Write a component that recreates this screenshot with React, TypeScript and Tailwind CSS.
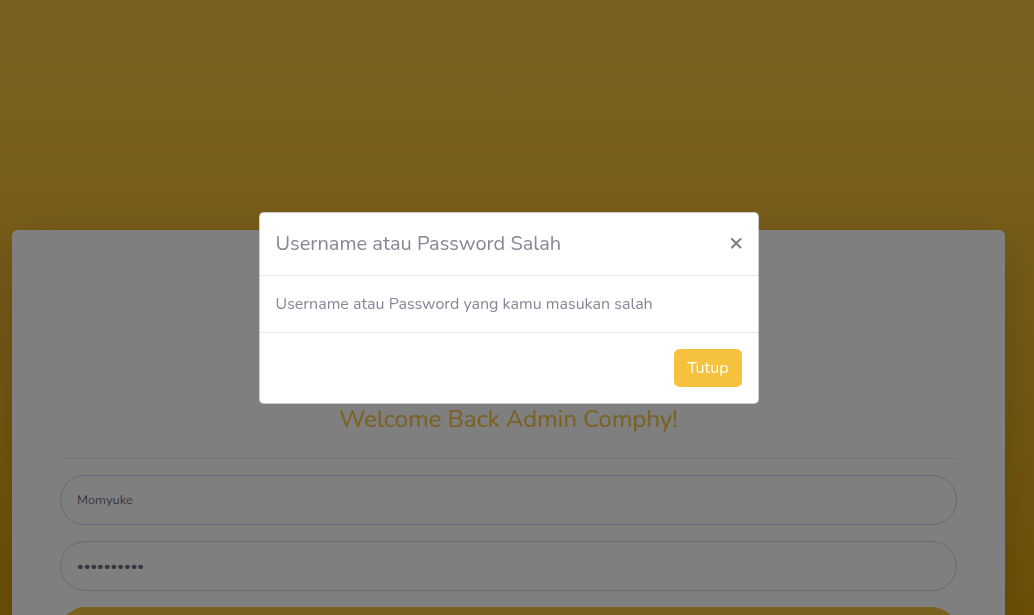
export default function App() {
  return (
    <div className="relative min-h-[615px] h-[615px] overflow-hidden bg-gradient-to-b from-[#f6c23e] from-10% to-[#dda20a] font-['Nunito','Lato','Noto_Sans',sans-serif] text-[#858796]">
      {/* Login page */}
      <div className="pl-3 pr-[29px] pt-[230px]">
        <div className="rounded-[0.35rem] bg-white shadow-[0_1rem_3rem_rgba(0,0,0,0.175)]">
          <div className="px-12 pt-[175px] pb-12">
            <h1 className="text-center text-[24px] leading-[29px] text-[#f6c23e]">
              Welcome Back Admin Comphy!
            </h1>
            <hr className="mt-[24px] mb-4 border-t border-[#e3e6f0]" />
            <form className="flex flex-col gap-4">
              <input
                readOnly
                value="Momyuke"
                className="h-[50px] w-full rounded-full border border-[#d1d3e2] px-4 text-[12.8px] text-[#6e707e] outline-none"
              />
              <input
                readOnly
                type="password"
                value="momyuke123"
                className="h-[50px] w-full rounded-full border border-[#d1d3e2] px-4 text-[12.8px] text-[#6e707e] outline-none"
              />
              <button
                type="button"
                className="h-[50px] w-full rounded-full bg-[#f6c23e] text-[12.8px] text-white"
              >
                Login
              </button>
            </form>
          </div>
        </div>
      </div>

      {/* Modal backdrop */}
      <div className="fixed inset-0 bg-black/50" />

      {/* Modal */}
      <div className="fixed inset-0 flex items-center justify-center pr-[17px]">
        <div className="w-[500px] rounded-[0.3rem] border border-black/20 bg-white">
          <div className="flex items-start justify-between border-b border-[#e3e6f0] px-4 py-4">
            <h5 className="text-[20px] leading-[30px] text-[#858796]">Username atau Password Salah</h5>
            <button className="mr-[-2px] mt-[-2px] text-[24px] font-bold leading-[30px] text-black opacity-50">
              ×
            </button>
          </div>
          <div className="border-b border-[#e3e6f0] p-4 text-[16px] leading-6 text-[#858796]">
            Username atau Password yang kamu masukan salah
          </div>
          <div className="flex justify-end p-3">
            <button className="m-1 h-[38px] rounded-[0.35rem] bg-[#f6c23e] px-[13px] text-[16px] text-white">
              Tutup
            </button>
          </div>
        </div>
      </div>
    </div>
  );
}
